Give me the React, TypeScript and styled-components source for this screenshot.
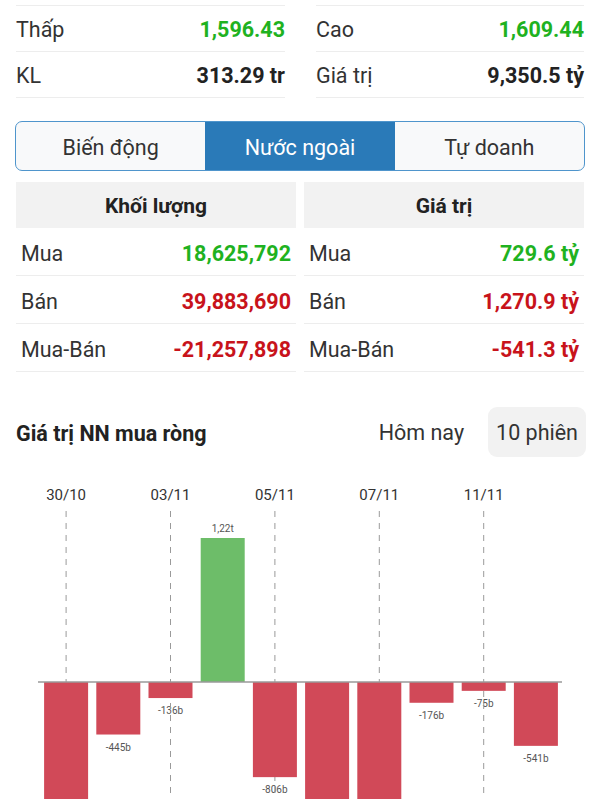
import React from 'react';
import styled, { createGlobalStyle } from 'styled-components';

type Tone = 'up' | 'down' | 'plain';

const toneColor = (tone: Tone) =>
  tone === 'up' ? '#1fb21f' : tone === 'down' ? '#c8131b' : '#222222';

const GlobalStyle = createGlobalStyle`
  body {
    margin: 0;
    background: #ffffff;
    font-family: Roboto, 'Noto Sans', sans-serif;
    color: #333333;
  }
`;

const Page = styled.div`
  width: 600px;
  height: 800px;
  overflow: hidden;
  background: #ffffff;
`;

const StatsGrid = styled.div`
  display: grid;
  grid-template-columns: 269px 268px;
  column-gap: 31px;
  padding: 5px 16px 0;
`;

const StatColumn = styled.div`
  border-top: 1px solid #ededed;
`;

const StatRow = styled.div`
  display: flex;
  align-items: center;
  justify-content: space-between;
  height: 46px;
  padding-top: 1px;
  box-sizing: border-box;
  border-bottom: 1px solid #ededed;
`;

const StatLabel = styled.span`
  color: #333333;
  font-size: 21.5px;
`;

const StatValue = styled.span<{ $tone: Tone }>`
  font-weight: 700;
  font-size: 21.5px;
  color: ${(p) => toneColor(p.$tone)};
`;

const Tabs = styled.div`
  display: grid;
  grid-template-columns: 1fr 1fr 1fr;
  margin: 23px 15px 0;
  height: 48px;
  border: 1.5px solid #4f95cc;
  border-radius: 7px;
  overflow: hidden;
  background: #f8f9fa;
`;

const Tab = styled.div<{ $active?: boolean }>`
  display: flex;
  align-items: center;
  justify-content: center;
  padding-top: 2px;
  font-size: 21.5px;
  color: ${(p) => (p.$active ? '#ffffff' : '#333333')};
  background: ${(p) => (p.$active ? '#2a7ab8' : 'transparent')};
`;

const Tables = styled.div`
  display: grid;
  grid-template-columns: 1fr 1fr;
  column-gap: 8px;
  padding: 11px 16px 0;
`;

const TableHead = styled.div`
  display: flex;
  align-items: center;
  justify-content: center;
  height: 46px;
  padding-top: 1px;
  box-sizing: border-box;
  background: #f2f2f2;
  font-size: 21px;
  font-weight: 700;
  color: #222222;
`;

const TableRow = styled.div`
  display: flex;
  align-items: center;
  justify-content: space-between;
  height: 48px;
  padding: 3px 5px 0;
  box-sizing: border-box;
  border-bottom: 1px solid #ededed;
`;

const SectionHead = styled.div`
  display: flex;
  align-items: center;
  justify-content: space-between;
  margin-top: 35px;
  padding: 0 14px 0 16px;
`;

const SectionTitle = styled.span`
  padding-top: 3px;
  font-size: 21.5px;
  font-weight: 700;
  color: #222222;
`;

const Switcher = styled.div`
  display: flex;
  align-items: center;
  gap: 16px;
`;

const SwitchItem = styled.div<{ $active?: boolean }>`
  height: 50px;
  display: flex;
  align-items: center;
  padding: 0 8px;
  border-radius: 9px;
  font-size: 21.5px;
  color: #333333;
  background: ${(p) => (p.$active ? '#f2f2f2' : 'transparent')};
`;

const ChartBox = styled.div`
  margin-top: 12px;
  height: 330px;
`;

const topStats: { label: string; value: string; tone: Tone }[][] = [
  [
    { label: 'Thấp', value: '1,596.43', tone: 'up' },
    { label: 'KL', value: '313.29 tr', tone: 'plain' },
  ],
  [
    { label: 'Cao', value: '1,609.44', tone: 'up' },
    { label: 'Giá trị', value: '9,350.5 tỷ', tone: 'plain' },
  ],
];

const foreignTables: { title: string; rows: { label: string; value: string; tone: Tone }[] }[] = [
  {
    title: 'Khối lượng',
    rows: [
      { label: 'Mua', value: '18,625,792', tone: 'up' },
      { label: 'Bán', value: '39,883,690', tone: 'down' },
      { label: 'Mua-Bán', value: '-21,257,898', tone: 'down' },
    ],
  },
  {
    title: 'Giá trị',
    rows: [
      { label: 'Mua', value: '729.6 tỷ', tone: 'up' },
      { label: 'Bán', value: '1,270.9 tỷ', tone: 'down' },
      { label: 'Mua-Bán', value: '-541.3 tỷ', tone: 'down' },
    ],
  },
];

// net foreign value per session, in billions
const sessions = [
  { value: -1150, label: '-1,15t', date: '30/10' },
  { value: -445, label: '-445b' },
  { value: -136, label: '-136b', date: '03/11' },
  { value: 1220, label: '1,22t' },
  { value: -806, label: '-806b', date: '05/11' },
  { value: -1230, label: '-1,23t' },
  { value: -1050, label: '-1,05t', date: '07/11' },
  { value: -176, label: '-176b' },
  { value: -75, label: '-75b', date: '11/11' },
  { value: -541, label: '-541b' },
];

const NetChart: React.FC = () => {
  const left = 40;
  const slot = 52.2;
  const barW = 44;
  const zero = 683;
  const scale = 144 / 1220;
  // labels of the tallest bars fall below the visible area
  const visible = (y: number) => y < 796;

  return (
    <svg width="600" height="330" viewBox="0 470 600 330" style={{ display: 'block' }}>
      {sessions.map((s, i) => {
        const cx = left + slot * i + slot / 2;
        const h = Math.abs(s.value) * scale;
        const y = s.value >= 0 ? zero - h - 6 : zero + h + 16;
        if (!visible(y)) return null;
        return (
          <text
            key={`l${i}`}
            x={cx}
            y={y}
            textAnchor="middle"
            fontSize="10"
            fill="#555"
            fontFamily="Roboto, sans-serif"
          >
            {s.label}
          </text>
        );
      })}
      {sessions.map((s, i) => {
        if (!s.date) return null;
        const cx = left + slot * i + slot / 2;
        return (
          <g key={`d${i}`}>
            <text
              x={cx}
              y={501}
              textAnchor="middle"
              fontSize="15"
              fill="#333"
              fontFamily="Roboto, sans-serif"
            >
              {s.date}
            </text>
            <line x1={cx} y1={512} x2={cx} y2={800} stroke="#9a9a9a" strokeWidth="1" strokeDasharray="6 6" />
          </g>
        );
      })}
      {sessions.map((s, i) => {
        const x = left + slot * i + (slot - barW) / 2;
        const h = Math.abs(s.value) * scale;
        return (
          <rect
            key={`b${i}`}
            x={x}
            y={s.value >= 0 ? zero - h : zero}
            width={barW}
            height={h}
            fill={s.value >= 0 ? '#6dbd69' : '#d14958'}
          />
        );
      })}
      <line x1={38} y1={zero} x2={562} y2={zero} stroke="#9a9a9a" strokeWidth="1.5" />
    </svg>
  );
};

const App: React.FC = () => {
  return (
    <Page>
      <GlobalStyle />
      <StatsGrid>
        {topStats.map((col, ci) => (
          <StatColumn key={ci}>
            {col.map((s) => (
              <StatRow key={s.label}>
                <StatLabel>{s.label}</StatLabel>
                <StatValue $tone={s.tone}>{s.value}</StatValue>
              </StatRow>
            ))}
          </StatColumn>
        ))}
      </StatsGrid>

      <Tabs>
        <Tab>Biến động</Tab>
        <Tab $active>Nước ngoài</Tab>
        <Tab>Tự doanh</Tab>
      </Tabs>

      <Tables>
        {foreignTables.map((t) => (
          <div key={t.title}>
            <TableHead>{t.title}</TableHead>
            {t.rows.map((r) => (
              <TableRow key={r.label}>
                <StatLabel>{r.label}</StatLabel>
                <StatValue $tone={r.tone}>{r.value}</StatValue>
              </TableRow>
            ))}
          </div>
        ))}
      </Tables>

      <SectionHead>
        <SectionTitle>Giá trị NN mua ròng</SectionTitle>
        <Switcher>
          <SwitchItem>Hôm nay</SwitchItem>
          <SwitchItem $active>10 phiên</SwitchItem>
        </Switcher>
      </SectionHead>

      <ChartBox>
        <NetChart />
      </ChartBox>
    </Page>
  );
};

export default App;
